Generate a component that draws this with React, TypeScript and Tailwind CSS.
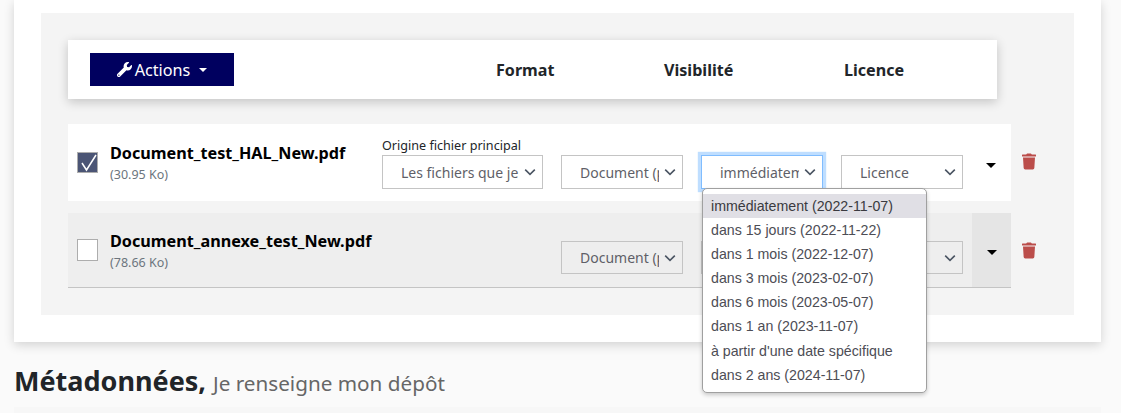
import { FaTrash, FaWrench } from "react-icons/fa";

const options = [
	"immédiatement (2022-11-07)",
	"dans 15 jours (2022-11-22)",
	"dans 1 mois (2022-12-07)",
	"dans 3 mois (2023-02-07)",
	"dans 6 mois (2023-05-07)",
	"dans 1 an (2023-11-07)",
	"à partir d'une date spécifique",
	"dans 2 ans (2024-11-07)",
];

function Chevron() {
	return (
		<svg width="12" height="12" viewBox="0 0 12 12" fill="none" className="absolute right-[6px] top-1/2 -translate-y-1/2">
			<path d="M1.2 3.6 L6 8.4 L10.8 3.6" stroke="#4b5563" strokeWidth="1.6" />
		</svg>
	);
}

function FakeSelect({ text, width, height, focused }: { text: string; width: string; height: string; focused?: boolean }) {
	return (
		<div
			className={`relative shrink-0 border text-[14px] text-[#5f5f68] ${width} ${height} ${
				focused ? "border-[#80bdff] bg-white shadow-[0_0_0_3.2px_#bfdeff]" : "border-[#c4c4c4]"
			}`}
		>
			{text && (
				<div className="absolute left-[18px] right-[23px] top-0 bottom-0 flex items-center overflow-hidden whitespace-nowrap">
					{text}
				</div>
			)}
			<Chevron />
		</div>
	);
}

function Caret() {
	return <span className="h-0 w-0 border-x-[5.5px] border-t-[5.5px] border-x-transparent border-t-black" />;
}

export default function App() {
	return (
		<div className="relative h-[413px] w-[1121px] overflow-hidden bg-[#fafafa] font-['Noto_Sans',sans-serif]">
			{/* main card */}
			<div className="ml-[14px] h-[342px] w-[1087px] bg-white pl-[27px] pt-[13px] shadow-[0_3px_10px_rgba(0,0,0,0.16)]">
				<div className="h-[302px] w-[1033px] bg-[#f4f4f4] pl-[27px] pt-[27px]">
					{/* toolbar */}
					<div className="flex h-[59px] w-[929px] items-center bg-white pl-[22px] text-[16.1px] leading-[24px] font-bold text-[#212529] shadow-[0_3px_10px_rgba(0,0,0,0.2)]">
						<button className="flex h-[33px] w-[144px] items-center justify-center gap-[3px] bg-[#00005f] text-[16.2px] leading-[24px] font-normal text-white">
							<FaWrench className="h-[15px] w-[15px]" />
							<span>Actions</span>
							<span className="ml-[6px] h-0 w-0 border-x-[4px] border-t-[4px] border-x-transparent border-t-white" />
						</button>
						<span className="ml-[262px] w-[168px]">Format</span>
						<span className="w-[180px]">Visibilité</span>
						<span>Licence</span>
					</div>

					{/* first file */}
					<div className="mt-[25px] flex">
						<div className="flex h-[77px] w-[943px] bg-white pl-[9px]">
							<div className="mt-[28px] flex h-[21px] w-[21px] items-center justify-center border border-[#adadad] bg-[#4b5575]">
								<svg width="19" height="19" viewBox="0 0 19 19" fill="none">
									<path d="M4 10 L8.5 17 L18 2" stroke="#fff" strokeWidth="1.5" />
								</svg>
							</div>
							<div className="ml-[12px] w-[272px] pt-[17px]">
								<div className="text-[16.2px] leading-[24px] font-bold text-black">Document_test_HAL_New.pdf</div>
								<div className="mt-px text-[12.5px] leading-[18px] text-[#6c757d]">(30.95 Ko)</div>
							</div>
							<div className="pt-[13px]">
								<div className="text-[12.6px] leading-[18px] text-[#212529]">Origine fichier principal</div>
								<div className="flex gap-[18px]">
									<FakeSelect text="Les fichiers que je" width="w-[161px]" height="h-[34px]" />
									<FakeSelect text="Document (pdf)" width="w-[122px]" height="h-[34px]" />
									<FakeSelect text="immédiatement" width="w-[122px]" height="h-[34px]" focused />
									<FakeSelect text="Licence" width="w-[122px]" height="h-[34px]" />
								</div>
							</div>
							<div className="ml-[23px] mt-[39px] flex h-[6px]">
								<Caret />
							</div>
						</div>
						<FaTrash className="ml-[11px] mt-[29px] h-[17px] w-[14px] text-[#bb4d4a]" />
					</div>

					{/* second file */}
					<div className="mt-[12px] flex">
						<div className="flex h-[75px] w-[943px] border-b border-[#c4c4c4] bg-[#eeeeee] pl-[9px]">
							<div className="mt-[26px] h-[22px] w-[21px] border border-[#adadad] bg-white" />
							<div className="ml-[12px] w-[451px] pt-[16px]">
								<div className="text-[16.2px] leading-[24px] font-bold text-black">Document_annexe_test_New.pdf</div>
								<div className="mt-px text-[12.5px] leading-[18px] text-[#6c757d]">(78.66 Ko)</div>
							</div>
							<div className="mt-[28px] flex gap-[18px]">
								<FakeSelect text="Document (pdf)" width="w-[122px]" height="h-[33px]" />
								<FakeSelect text="" width="w-[122px]" height="h-[33px]" />
								<FakeSelect text="" width="w-[122px]" height="h-[33px]" />
							</div>
							<div className="ml-[9px] flex h-[74px] w-[39px] items-center justify-center bg-[#e5e5e5] pt-[4px]">
								<Caret />
							</div>
						</div>
						<FaTrash className="ml-[11px] mt-[29px] h-[17px] w-[14px] text-[#bb4d4a]" />
					</div>
				</div>
			</div>

			{/* heading */}
			<div className="ml-[14px] mt-[20px] flex h-[38px] items-baseline gap-[7px] whitespace-nowrap">
				<span className="text-[27px] leading-[38px] font-bold text-[#212529]">Métadonnées,</span>
				<span className="text-[20.7px] text-[#666]">Je renseigne mon dépôt</span>
			</div>
			<div className="ml-[14px] mt-[7px] h-[20px] w-[1087px] bg-[#f7f7f7]" />

			{/* open visibility list */}
			<ul className="absolute left-[702px] top-[188px] h-[205px] w-[225px] rounded-[5px] border border-[#a0a0a0] bg-white pt-[5px] font-['Liberation_Sans',sans-serif] text-[14.2px] leading-[22px] text-[#4d4d55] shadow-[0_2px_4px_rgba(0,0,0,0.2)]">
				{options.map((option, i) => (
					<li key={option} className={`h-[24.1px] pl-[8px] pt-px whitespace-nowrap ${i === 0 ? "bg-[#e0dfe5] text-[#3a3a40]" : ""}`}>
						{option}
					</li>
				))}
			</ul>
		</div>
	);
}
